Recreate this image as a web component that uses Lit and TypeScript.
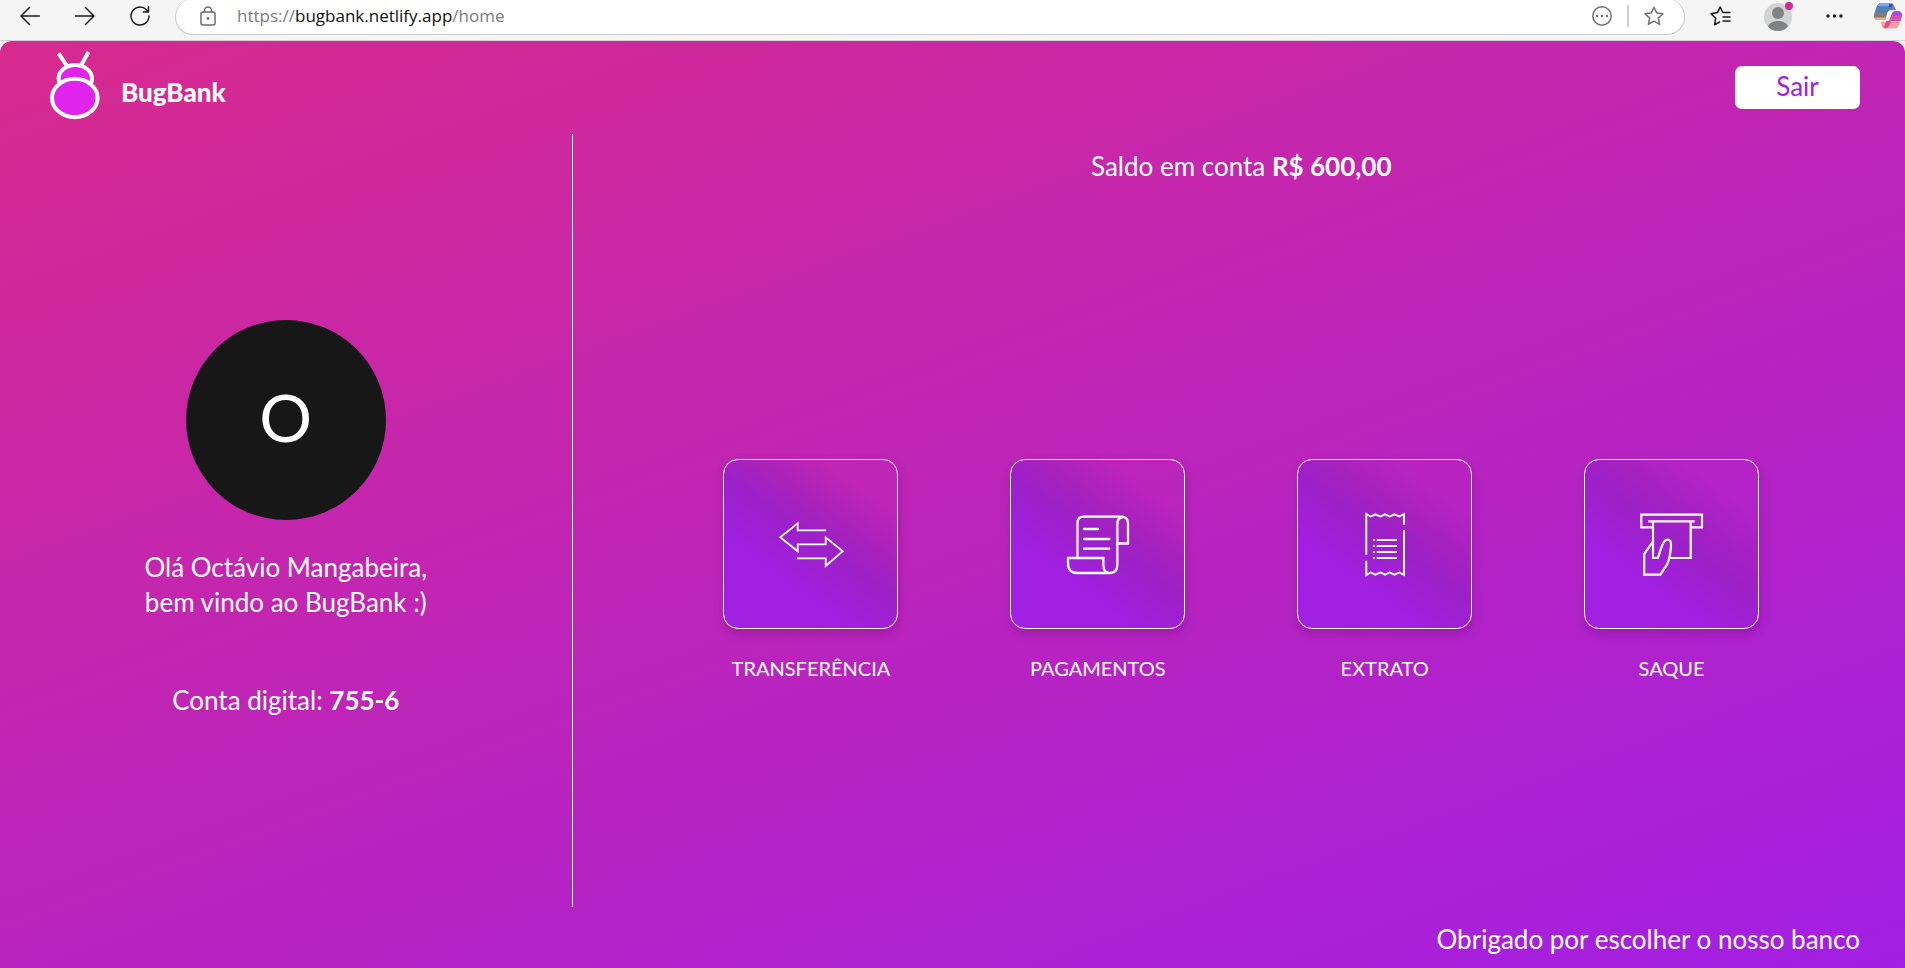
import { LitElement, html, css, svg } from "lit";
import { customElement, property } from "lit/decorators.js";

const STAR =
  "M10 1.2l2.7 5.8 6.3.8-4.7 4.3 1.3 6.3-5.6-3.2-5.6 3.2 1.3-6.3L1 7.8l6.3-.8z";

@customElement("browser-bar")
class BrowserBar extends LitElement {
  static styles = css`
    :host {
      display: flex;
      align-items: flex-start;
      height: 41px;
      box-sizing: border-box;
      border-bottom: 1px solid #d5d0d4;
      background: #f5f5f5;
      color: #1b1b1b;
      overflow: hidden;
    }
    svg {
      display: block;
      fill: none;
      stroke: currentColor;
      stroke-width: 1.5;
      stroke-linecap: round;
      stroke-linejoin: round;
    }
    .icon {
      display: grid;
      place-items: center;
      height: 32px;
      padding: 0;
      border: 0;
      background: none;
      color: inherit;
    }
    .nav {
      display: flex;
      gap: 35px;
      padding: 0 25px 0 20px;
    }
    .address {
      flex: 1;
      display: flex;
      align-items: center;
      height: 36px;
      margin-top: -1px;
      padding: 0 20px 2px 24px;
      box-sizing: border-box;
      border: 1px solid #cdc9cd;
      border-top: 0;
      border-radius: 18px;
      background: #fff;
      color: #6e6e6e;
    }
    .url {
      flex: 1;
      margin-left: 21px;
      font: 17px/24px "Open Sans", "Noto Sans", sans-serif;
      color: #7a7a80;
    }
    .host {
      color: #111;
    }
    .sep {
      width: 2px;
      height: 22px;
      margin: 0 15px;
      background: #d0d0d0;
    }
    .tools {
      display: flex;
      align-items: center;
      height: 32px;
      padding: 0 3px 0 25px;
    }
    .avatar {
      margin: 0 33px;
    }
    .more {
      margin-right: 31px;
    }
    .solid {
      stroke: none;
    }
  `;

  render() {
    return html`
      <nav class="nav">
        <button class="icon" aria-label="Voltar">
          <svg width="20" height="20" viewBox="0 0 20 20"><path d="M19.5 10H1M9.5 1.5L1 10l8.500 8.500" /></svg>
        </button>
        <button class="icon" aria-label="Avançar">
          <svg width="20" height="20" viewBox="0 0 20 20"><path d="M.5 10H19M10.500 1.500L19 10l-8.500 8.500" /></svg>
        </button>
        <button class="icon" aria-label="Atualizar">
          <svg width="20" height="20" viewBox="0 0 20 20">
            <path d="M19 10a9 9 0 1 1-3-6.700l2.300 2.400M18.500.8V6h-5.200" />
          </svg>
        </button>
      </nav>
      <div class="address">
        <svg width="16" height="20" viewBox="0 0 16 20">
          <rect x="1" y="6" width="14" height="13" rx="2" />
          <path d="M4.500 6V4.500a3.500 3.500 0 0 1 7 0V6" />
          <circle class="solid" cx="8" cy="12.500" r="1.400" fill="currentColor" />
        </svg>
        <span class="url">https://<span class="host">bugbank.netlify.app</span>/home</span>
        <button class="icon" aria-label="Opções do site">
          <svg width="20" height="20" viewBox="0 0 20 20">
            <circle cx="10" cy="10" r="9.200" />
            <g class="solid" fill="currentColor">
              <circle cx="5" cy="10" r="1.200" /><circle cx="10" cy="10" r="1.200" /><circle cx="15" cy="10" r="1.200" />
            </g>
          </svg>
        </button>
        <span class="sep"></span>
        <button class="icon" aria-label="Adicionar aos favoritos">
          <svg width="20" height="20" viewBox="0 0 20 20"><path d=${STAR} /></svg>
        </button>
      </div>
      <div class="tools">
        <button class="icon" aria-label="Favoritos">
          <svg width="21" height="20" viewBox="0 0 21 20">
            <path d="M12.800 6.500L10.200 1 7.500 6.600 1 7.700l4.700 4.500L4.600 18.800l5-2.800M13 6.500h7M13 11h7M13 15h7" />
          </svg>
        </button>
        <button class="icon avatar" aria-label="Perfil">
          <svg width="29" height="30" viewBox="0 0 29 30">
            <g class="solid">
              <circle cx="14" cy="16" r="14" fill="#d3d3d3" />
              <circle cx="14" cy="12" r="6" fill="#7d8484" />
              <path d="M4 25.500c2-7.500 18-7.500 20 0-5 6-15 6-20 0z" fill="#7d8484" />
              <circle cx="25" cy="5" r="4" fill="#d92a90" />
            </g>
          </svg>
        </button>
        <button class="icon more" aria-label="Mais">
          <svg width="17" height="4" viewBox="0 0 17 4">
            <g class="solid" fill="currentColor">
              <circle cx="2" cy="2" r="1.700" /><circle cx="8.500" cy="2" r="1.700" /><circle cx="15" cy="2" r="1.700" />
            </g>
          </svg>
        </button>
        <button class="icon" aria-label="Copilot">
          <svg width="28" height="27" viewBox="0 0 28 27">
            <g class="solid">
              <path d="M8 0h8c3 0 4 2 5 5l1 2h-4c-4 0-5 3-6 6l-1 4H4c-4 0-4.500-4-3.500-7l2-6C3.500 1 5 0 8 0z" fill="#5482b0" />
              <path d="M8 0h8c2 0 3 1 4 3L3.500 3C4.500 1 6 0 8 0z" fill="#7fa8ea" />
              <path d="M1 10h12l-1 4.500H.5C0 13 .4 11.500 1 10z" fill="#867e5c" />
              <path d="M.5 14.500H12l-.8 2.500H4c-2 0-3-1-3.500-2.500z" fill="#f0a898" />
              <path d="M22 8h2c3.500 0 4.500 3 3.500 6l-2 7c-1 3-2.500 4.500-5.500 4.500h-8c-3 0-4-2-4.500-4l-.5-3h3c0 2 5 1 6-2l1-4c1-3 2-4.500 5-4.500z" fill="#f4a0a0" />
              <path d="M22 8h2c3.500 0 4.500 3 3.500 6l-.8 3-10.700 1L17.500 12c1-3 2-4 4.500-4z" fill="#a94bdc" />
              <path d="M17.300 12.500h10.500L26.500 18H15z" fill="#dd4fae" />
              <path d="M12 18h5c-1 4-2 6.500-6 7.500-2-1-2-2 0-3.500z" fill="#e0508e" />
              <path d="M15 1h3l1 1-2 2h-2z" fill="#6a2fb8" />
            </g>
          </svg>
        </button>
      </div>
    `;
  }
}

const ICONS: Record<string, unknown> = {
  transfer: svg`
    <g stroke-width="1.800">
      <path d="M47.300 18.300H18.700V11.300L1.300 25.300l17.400 14V32.300H46.700V25.300l17 14-17 14.700V46.300H18" />
    </g>`,
  payments: svg`
    <g stroke-width="2.300" stroke-linecap="round">
      <path d="M11.500 46V11q0-6.300 6.300-6.300H55q7 0 7 7V31.500H51.500" />
      <path d="M57 5q-5.600.5-5.600 7V52.500q0 8.500-8 8.500-6 0-6-8V46H2v5q0 10 9 10H44" />
      <path d="M18 17H32M18 27H43.300M18 36.700H43.300" />
    </g>`,
  statement: svg`
    <g stroke-width="1.900">
      <path d="M13.300 42.700V2l4.400 2.500 4.600-2.200 5 2.200L32 2.300l4.800 2.200 4.700-2.200 4.900 2.200L51 2V12.700" />
      <path d="M51 18V63l-4.600-2.500-4.900 2.200-4.700-2.200-4.800 2.200-4.700-2.200-5 2.200-4.600-2.200L13.300 63V48.700" />
      <path d="M23.700 28H44M23.700 34H44M23.700 40H44M23.700 46H44M20 28h2M20 34h2M20 40h2M20 46h2" />
    </g>`,
  withdraw: svg`
    <g stroke-width="2.200">
      <path d="M13 15.300H1.300V2.700H62V15.300H50.700M8.300 9.300H54.700" />
      <path d="M50.700 9.300V46H29M13 9.300V46h4.700c1.400-2 2.200-7.500 4-11.300 1.600-4.400 3.200-7 5.800-7 3 0 3.800 2.500 3.500 6.300-.4 6-1.800 14-4 18.700L20.300 62.700H4.200V42L13 29.300" />
    </g>`,
};

@customElement("action-tile")
class ActionTile extends LitElement {
  @property() icon = "";
  @property() label = "";

  static styles = css`
    :host {
      display: flex;
      justify-content: center;
    }
    .action {
      display: flex;
      flex-direction: column;
      align-items: center;
      gap: 24px;
      color: #fff;
      text-decoration: none;
      font-size: 20px;
      line-height: 30px;
      text-transform: uppercase;
    }
    .card {
      display: grid;
      place-items: center;
      width: 175px;
      height: 170px;
      box-sizing: border-box;
      border: 1px solid #fff;
      border-radius: 15px;
      background: linear-gradient(
        36deg,
        #a220e2 30%,
        #9c20c8 52%,
        rgba(156, 32, 190, 0.6) 65%,
        rgba(190, 36, 180, 0) 82%
      );
      box-shadow: 1px 5px 10px rgba(80, 0, 90, 0.25);
    }
    svg {
      display: block;
      fill: none;
      stroke: #fff;
      overflow: visible;
    }
  `;

  render() {
    return html`
      <a class="action" href="#">
        <span class="card">
          <svg width="64" height="64" viewBox="0 0 64 64" aria-hidden="true">${ICONS[this.icon]}</svg>
        </span>
        <span>${this.label}</span>
      </a>
    `;
  }
}

@customElement("app-root")
class AppRoot extends LitElement {
  static styles = css`
    :host {
      display: flex;
      flex-direction: column;
      min-height: 100vh;
      background: #f5f5f5;
      font-family: Lato, "Open Sans", sans-serif;
      font-size: 26px;
      line-height: 35px;
      color: #fff;
    }
    .page {
      flex: 1;
      display: flex;
      flex-direction: column;
      border-radius: 12px 12px 0 0;
      background: linear-gradient(160deg, #d82a8e, #a21fe3);
    }
    .top {
      display: flex;
      align-items: center;
      justify-content: space-between;
      padding: 10px 45px 14px 50px;
    }
    .brand {
      display: flex;
      align-items: center;
      gap: 21px;
      color: #fff;
      text-decoration: none;
      font-size: 26px;
      font-weight: 900;
    }
    .brand svg {
      display: block;
      overflow: visible;
    }
    .name {
      padding-top: 14px;
    }
    .exit {
      width: 125px;
      height: 43px;
      margin-top: 4px;
      padding: 0 0 3px;
      border: 0;
      border-radius: 7px;
      background: #fff;
      color: #a220e2;
      font-family: inherit;
      font-size: 26px;
    }
    .body {
      flex: 1;
      display: grid;
      grid-template-columns: 30% 1fr;
    }
    .profile {
      display: flex;
      flex-direction: column;
      align-items: center;
      justify-content: center;
      gap: 30px;
      padding-bottom: 4px;
      text-align: center;
    }
    .avatar {
      display: grid;
      place-items: center;
      width: 200px;
      height: 200px;
      padding-bottom: 6px;
      box-sizing: border-box;
      border-radius: 50%;
      background: #171717;
      font-size: 66px;
    }
    .profile p {
      margin: 0;
    }
    .account {
      padding-top: 33px;
    }
    .content {
      display: flex;
      flex-direction: column;
      padding: 15px 90px 0 95px;
      border-left: 1px solid #fff;
    }
    .balance {
      margin: 0;
      text-align: center;
    }
    .actions {
      flex: 1;
      display: grid;
      grid-template-columns: repeat(4, 1fr);
      align-items: center;
      padding-top: 51px;
    }
    .foot {
      padding: 15px 45px 11px;
      text-align: right;
    }
  `;

  render() {
    return html`
      <browser-bar></browser-bar>
      <div class="page">
        <header class="top">
          <a class="brand" href="#">
            <svg width="50" height="69" viewBox="0 0 50 69" fill="#e024eb" stroke="#fff" stroke-width="4" aria-hidden="true">
              <path d="M8.500 2.300L17 15M38.500 1L31 14.500" />
              <ellipse cx="25.300" cy="27.500" rx="16.700" ry="13.500" />
              <ellipse cx="24.800" cy="47" rx="22.800" ry="19.200" />
            </svg>
            <span class="name">BugBank</span>
          </a>
          <button class="exit">Sair</button>
        </header>
        <main class="body">
          <section class="profile">
            <div class="avatar">O</div>
            <p>Olá Octávio Mangabeira,<br />bem vindo ao BugBank :)</p>
            <p class="account">Conta digital: <strong>755-6</strong></p>
          </section>
          <section class="content">
            <p class="balance">Saldo em conta <strong>R$ 600,00</strong></p>
            <nav class="actions">
              <action-tile icon="transfer" label="Transferência"></action-tile>
              <action-tile icon="payments" label="Pagamentos"></action-tile>
              <action-tile icon="statement" label="Extrato"></action-tile>
              <action-tile icon="withdraw" label="Saque"></action-tile>
            </nav>
          </section>
        </main>
        <footer class="foot">Obrigado por escolher o nosso banco</footer>
      </div>
    `;
  }
}
